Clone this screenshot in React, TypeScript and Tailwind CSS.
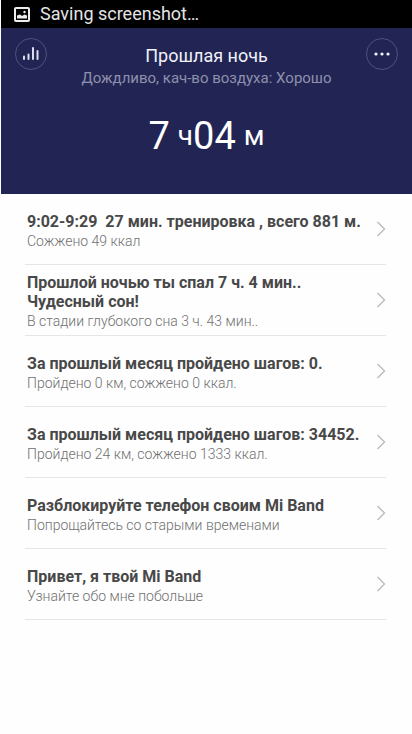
import React from "react";

type Entry = { title: string; detail: string };

const entries: Entry[] = [
  { title: "9:02-9:29  27 мин. тренировка , всего 881 м.", detail: "Сожжено 49 ккал" },
  { title: "Прошлой ночью ты спал 7 ч. 4 мин..\nЧудесный сон!", detail: "В стадии глубокого сна 3 ч. 43 мин.." },
  { title: "За прошлый месяц пройдено шагов: 0.", detail: "Пройдено 0 км, сожжено 0 ккал." },
  { title: "За прошлый месяц пройдено шагов: 34452.", detail: "Пройдено 24 км, сожжено 1333 ккал." },
  { title: "Разблокируйте телефон своим Mi Band", detail: "Попрощайтесь со старыми временами" },
  { title: "Привет, я твой Mi Band", detail: "Узнайте обо мне побольше" },
];

function StatusBar() {
  return (
    <div className="flex h-7 items-center gap-2 bg-black pl-3 text-lg leading-7 text-[#e4e4e4]">
      <svg width="19" height="17" viewBox="0 0 19 17" fill="none" aria-hidden="true">
        <rect x="2" y="2" width="14" height="13" rx="1" stroke="#ededed" strokeWidth="2" />
        <path d="M4 12.5V9.5L7 8.5L9 10L11.5 8.5L14 9.5V12.5Z" fill="#ededed" />
        <circle cx="11.5" cy="6" r="1.2" fill="#ededed" />
      </svg>
      <span>Saving screenshot…</span>
    </div>
  );
}

function RoundButton({ label, children }: { label: string; children: React.ReactNode }) {
  return (
    <button
      type="button"
      aria-label={label}
      className="flex size-8 shrink-0 items-center justify-center rounded-full border border-[#50507c]"
    >
      {children}
    </button>
  );
}

function Header() {
  return (
    <header className="h-[166px] bg-[#222553] px-3.5 pt-2.5 text-center">
      <div className="flex items-start justify-between">
        <RoundButton label="Статистика">
          <svg width="18" height="16" viewBox="0 0 18 16" stroke="#dcdcf0" strokeWidth="2" strokeLinecap="round" aria-hidden="true">
            <path d="M2 10.5V13M6.5 8.5V13M11 2V13M15.5 5V13" />
          </svg>
        </RoundButton>
        <div className="pt-1.5">
          <h1 className="text-lg leading-6 text-[#f1f1fa]">Прошлая ночь</h1>
          <p className="text-[15px] leading-5 text-[#8f90ae]">Дождливо, кач-во воздуха: Хорошо</p>
        </div>
        <RoundButton label="Меню">
          <svg width="18" height="6" viewBox="0 0 18 6" fill="#f4f4fc" aria-hidden="true">
            <circle cx="3" cy="3" r="1.6" />
            <circle cx="9" cy="3" r="1.6" />
            <circle cx="15" cy="3" r="1.6" />
          </svg>
        </RoundButton>
      </div>
      <p className="flex items-center justify-center pt-7 leading-10 text-white">
        <span className="text-[38px]">7</span>
        <span className="pl-2 text-[28px]">ч</span>
        <span className="text-[38px]">04</span>
        <span className="pl-2 text-[28px]">м</span>
      </p>
    </header>
  );
}

function EntryRow({ title, detail }: Entry) {
  return (
    <li className="border-b border-[#e6e6e6]">
      <button type="button" className="flex h-[70px] w-full items-center justify-between pl-0.5 text-left">
        <span className="min-w-0 pt-1">
          <span className="block whitespace-pre text-base leading-[19px] font-bold text-[#484848]">{title}</span>
          <span className="block text-sm leading-5 font-light text-[#707070]">{detail}</span>
        </span>
        <svg className="shrink-0" width="10" height="16" viewBox="0 0 10 16" fill="none" stroke="#b9b9b9" strokeWidth="1.3" aria-hidden="true">
          <path d="M1.5 1L8.5 8L1.5 15" />
        </svg>
      </button>
    </li>
  );
}

export default function App() {
  return (
    <div className="min-h-screen bg-[#fefefe] pl-px font-['Roboto',sans-serif]">
      <StatusBar />
      <Header />
      <main className="pr-[26px] pl-6">
        <ul>
          {entries.map((entry) => (
            <EntryRow key={entry.title} {...entry} />
          ))}
        </ul>
      </main>
    </div>
  );
}
